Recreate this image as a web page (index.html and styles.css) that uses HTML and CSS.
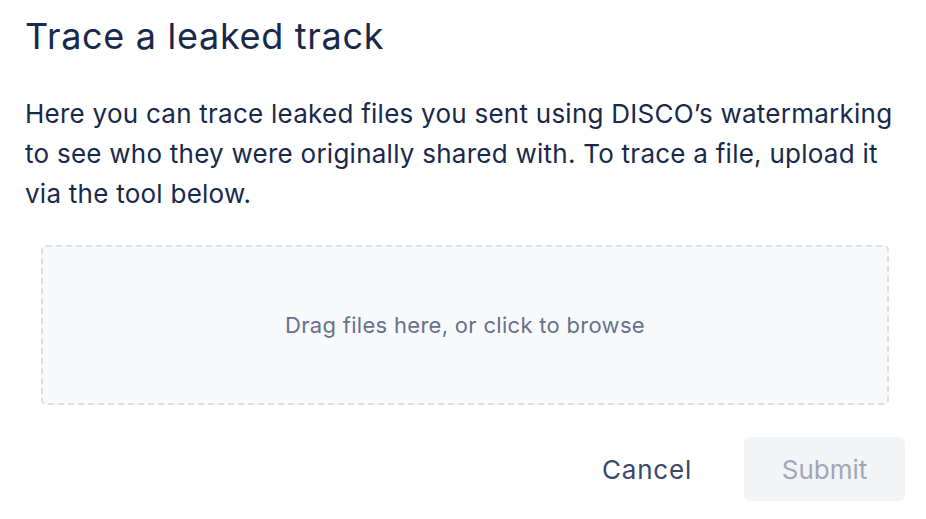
FILE: index.html
```html
<!DOCTYPE html>
<html>
<head>
<meta charset="utf-8">
<link rel="stylesheet" href="styles.css">
</head>
<body>
<div class="modal">
  <h1 class="title">Trace a leaked track</h1>
  <p class="intro">Here you can trace leaked files you sent using DISCO’s watermarking to see who they were originally shared with. To trace a file, upload it via the tool below.</p>
  <div class="dropzone">Drag files here, or click to browse</div>
  <div class="actions">
    <button class="btn btn-cancel">Cancel</button>
    <button class="btn btn-submit" disabled>Submit</button>
  </div>
</div>
</body>
</html>
```
FILE: styles.css
```css
html, body {
  margin: 0;
  padding: 0;
  background: #ffffff;
}
body {
  font-family: "Inter", "Lato", sans-serif;
  color: #18294b;
}
.modal {
  padding: 14px 21px 0 25px;
}
.title {
  margin: 0;
  font-size: 36px;
  font-weight: 400;
  line-height: 44px;
  letter-spacing: 0.7px;
  color: #18294b;
}
.intro {
  margin: 36px 0 0;
  font-size: 26px;
  line-height: 40px;
  letter-spacing: 0.25px;
  color: #18294b;
}
.dropzone {
  margin: 31px 16px 0;
  height: 156px;
  border: 2px dashed #dcdfe4;
  border-radius: 5px;
  background: #f8f9fb;
  display: flex;
  align-items: center;
  justify-content: center;
  font-size: 22px;
  letter-spacing: 0.3px;
  color: #66728b;
}
.actions {
  display: flex;
  justify-content: flex-end;
  align-items: center;
  gap: 36px;
  margin-top: 32px;
}
.btn {
  font-family: inherit;
  font-size: 26px;
  border: none;
  background: transparent;
  height: 64px;
  border-radius: 6px;
  cursor: pointer;
  padding: 0;
}
.btn-cancel {
  color: #3b4869;
  padding: 0 16px;
  letter-spacing: 0.8px;
}
.btn-submit {
  background: #f3f4f6;
  color: #a0a8b8;
  width: 161px;
}
```
